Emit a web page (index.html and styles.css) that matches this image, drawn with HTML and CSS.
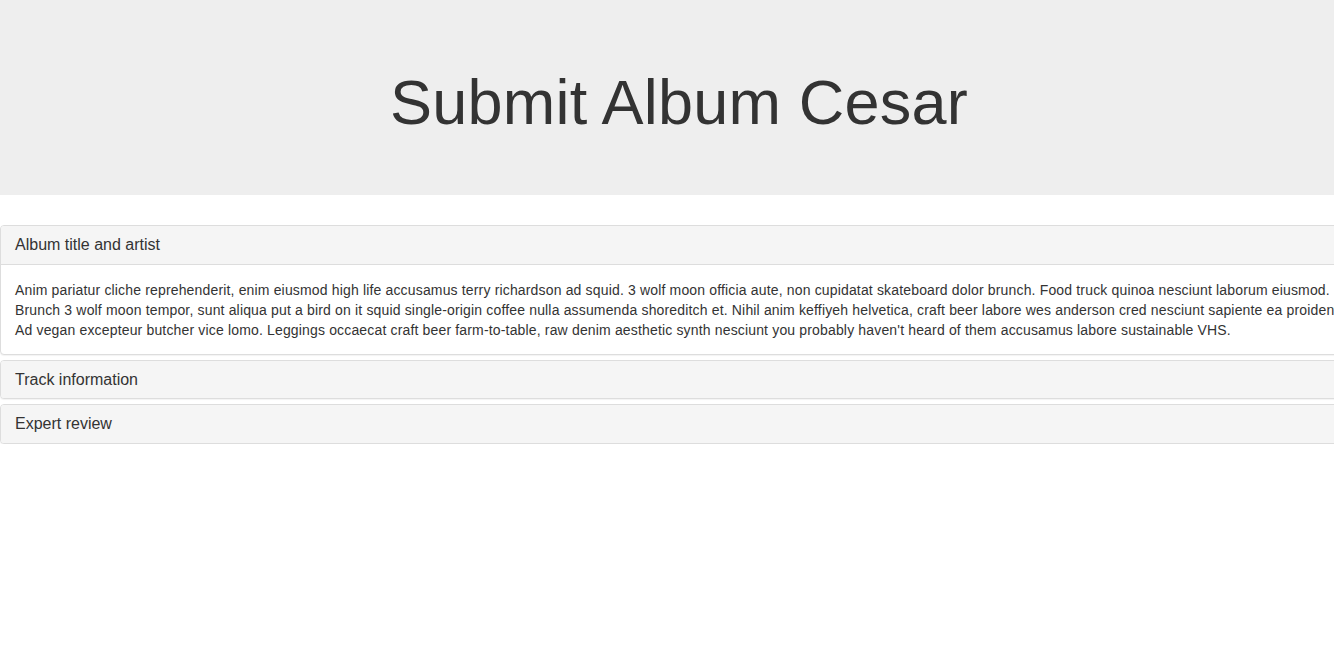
FILE: index.html
```html
<!DOCTYPE html>
<html lang="en">
<head>
<meta charset="utf-8">
<title>Submit Album Cesar</title>
<link rel="stylesheet" href="styles.css">
</head>
<body>
<div class="jumbotron">
  <h1>Submit Album Cesar</h1>
</div>
<div class="panel-group">
  <div class="panel">
    <div class="panel-heading"><h4 class="panel-title">Album title and artist</h4></div>
    <div class="panel-body">Anim pariatur cliche reprehenderit, enim eiusmod high life accusamus terry richardson ad squid. 3 wolf moon officia aute, non cupidatat skateboard dolor brunch. Food truck quinoa nesciunt laborum eiusmod. Brunch 3 wolf moon tempor, sunt aliqua put a bird on it squid single-origin coffee nulla assumenda shoreditch et. Nihil anim keffiyeh helvetica, craft beer labore wes anderson cred nesciunt sapiente ea proident. Ad vegan excepteur butcher vice lomo. Leggings occaecat craft beer farm-to-table, raw denim aesthetic synth nesciunt you probably haven't heard of them accusamus labore sustainable VHS.</div>
  </div>
  <div class="panel">
    <div class="panel-heading"><h4 class="panel-title">Track information</h4></div>
  </div>
  <div class="panel">
    <div class="panel-heading"><h4 class="panel-title">Expert review</h4></div>
  </div>
</div>
</body>
</html>
```
FILE: styles.css
```css
html, body {
  overflow-x: hidden;
}
body {
  margin: 0;
  font-family: "Liberation Sans", Arial, sans-serif;
  font-size: 14px;
  line-height: 1.42857143;
  color: #333;
  background: #fff;
}
.jumbotron {
  background: #eee;
  padding: 48px 0;
  margin-bottom: 30px;
  text-align: center;
}
.jumbotron h1 {
  margin: 20px 0 10px;
  font-size: 63px;
  font-weight: 500;
  line-height: 1.1;
  color: #333;
  letter-spacing: 0.2px;
  padding-left: 24px;
}
.panel-group {
  width: calc(100% + 40px);
}
.panel {
  border: 1px solid #ddd;
  border-radius: 4px;
  background: #fff;
  box-shadow: 0 1px 1px rgba(0,0,0,0.05);
  overflow: hidden;
}
.panel + .panel {
  margin-top: 5px;
}
.panel-heading {
  background: #f5f5f5;
  padding: 10px 15px 10px 14px;
  color: #333;
}
.panel-title {
  margin: 0;
  font-size: 16px;
  font-weight: 500;
  line-height: 1.1;
}
.panel-body {
  border-top: 1px solid #ddd;
  padding: 15px 15px 14px 14px;
  letter-spacing: 0.16px;
}
```
